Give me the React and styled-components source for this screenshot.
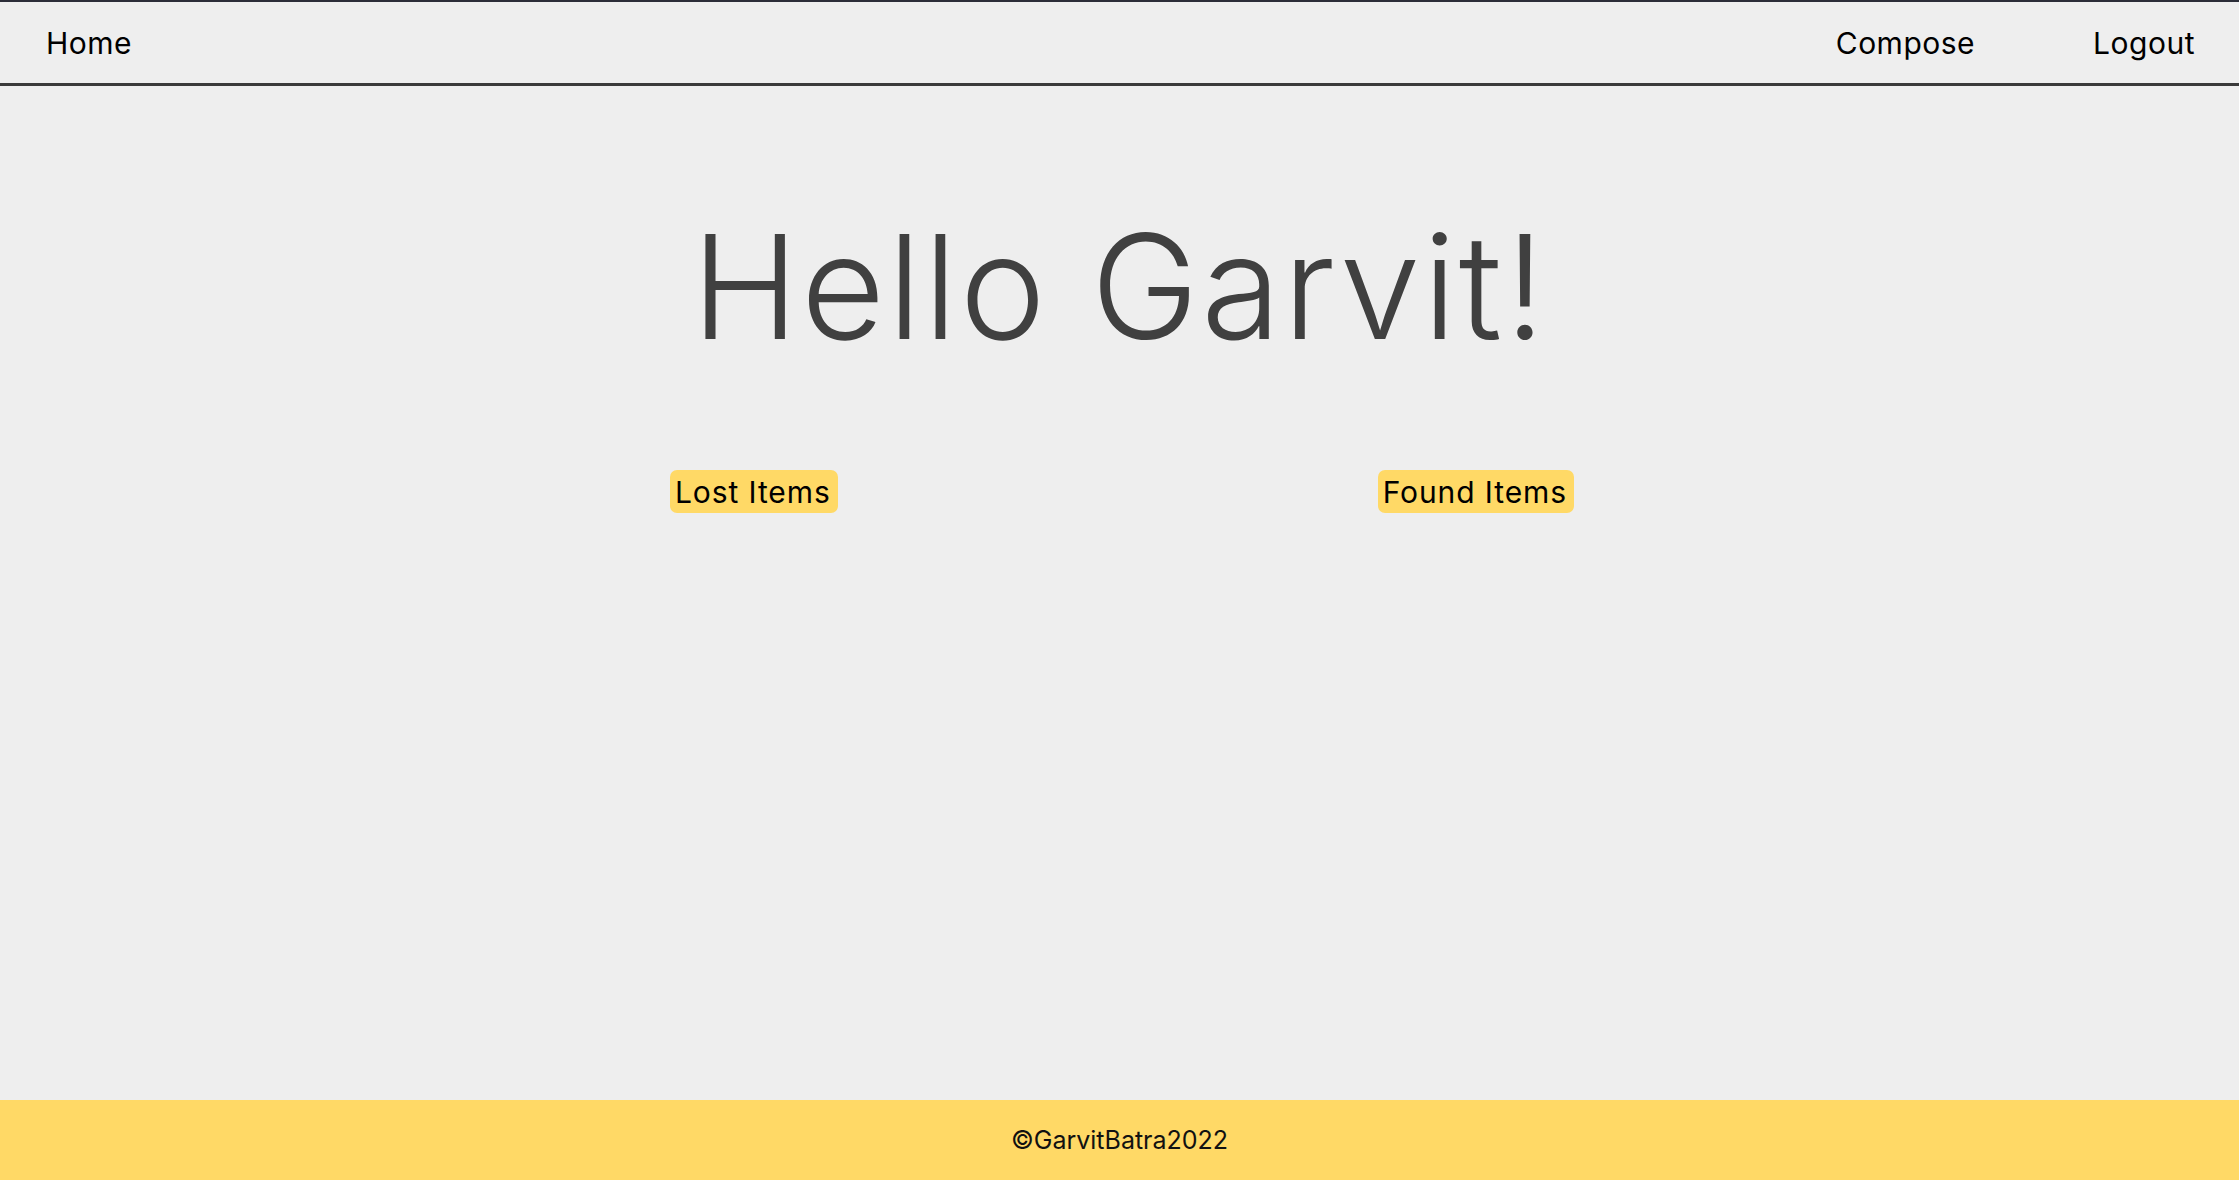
import React from 'react';
import styled, { createGlobalStyle } from 'styled-components';

const GlobalStyle = createGlobalStyle`
  body {
    margin: 0;
    background-color: #eeeeee;
    font-family: Inter, "Open Sans", sans-serif;
  }
`;

const Page = styled.div`
  min-height: 100vh;
  display: flex;
  flex-direction: column;
  border-top: 2px solid #2b2d38;
  box-sizing: border-box;
`;

const Navbar = styled.nav`
  display: flex;
  align-items: center;
  justify-content: space-between;
  height: 81px;
  padding: 0 44px 0 46px;
  border-bottom: 3px solid #3a3a3a;
`;

const NavGroup = styled.div`
  display: flex;
  align-items: center;
  gap: 118px;
`;

const NavLink = styled.a`
  color: #000;
  text-decoration: none;
  font-size: 30px;
  font-weight: 400;
  letter-spacing: 0.5px;
  cursor: pointer;
`;

const Main = styled.main`
  flex: 1;
  display: flex;
  flex-direction: column;
  align-items: center;
`;

const Greeting = styled.h1`
  margin: 128px 0 0;
  font-size: 145px;
  line-height: 1;
  font-weight: 300;
  color: #404040;
  letter-spacing: 2.3px;
`;

const ButtonRow = styled.div`
  display: flex;
  justify-content: center;
  gap: 540px;
  margin-top: 111px;
  padding-left: 5px;
`;

const ItemButton = styled.button`
  background-color: #ffd966;
  border: none;
  border-radius: 7px;
  height: 43px;
  padding: 0 7px 0 5px;
  font-family: inherit;
  font-size: 30px;
  font-weight: 400;
  letter-spacing: 0.9px;
  color: #000;
  cursor: pointer;
`;

const Footer = styled.footer`
  background-color: #ffd966;
  height: 80px;
  display: flex;
  align-items: center;
  justify-content: center;
  font-size: 25px;
  color: #111;
`;

export default function App() {
  return (
    <>
      <GlobalStyle />
      <Page>
        <Navbar>
          <NavLink>Home</NavLink>
          <NavGroup>
            <NavLink>Compose</NavLink>
            <NavLink>Logout</NavLink>
          </NavGroup>
        </Navbar>
        <Main>
          <Greeting>Hello Garvit!</Greeting>
          <ButtonRow>
            <ItemButton>Lost Items</ItemButton>
            <ItemButton>Found Items</ItemButton>
          </ButtonRow>
        </Main>
        <Footer>©GarvitBatra2022</Footer>
      </Page>
    </>
  );
}
